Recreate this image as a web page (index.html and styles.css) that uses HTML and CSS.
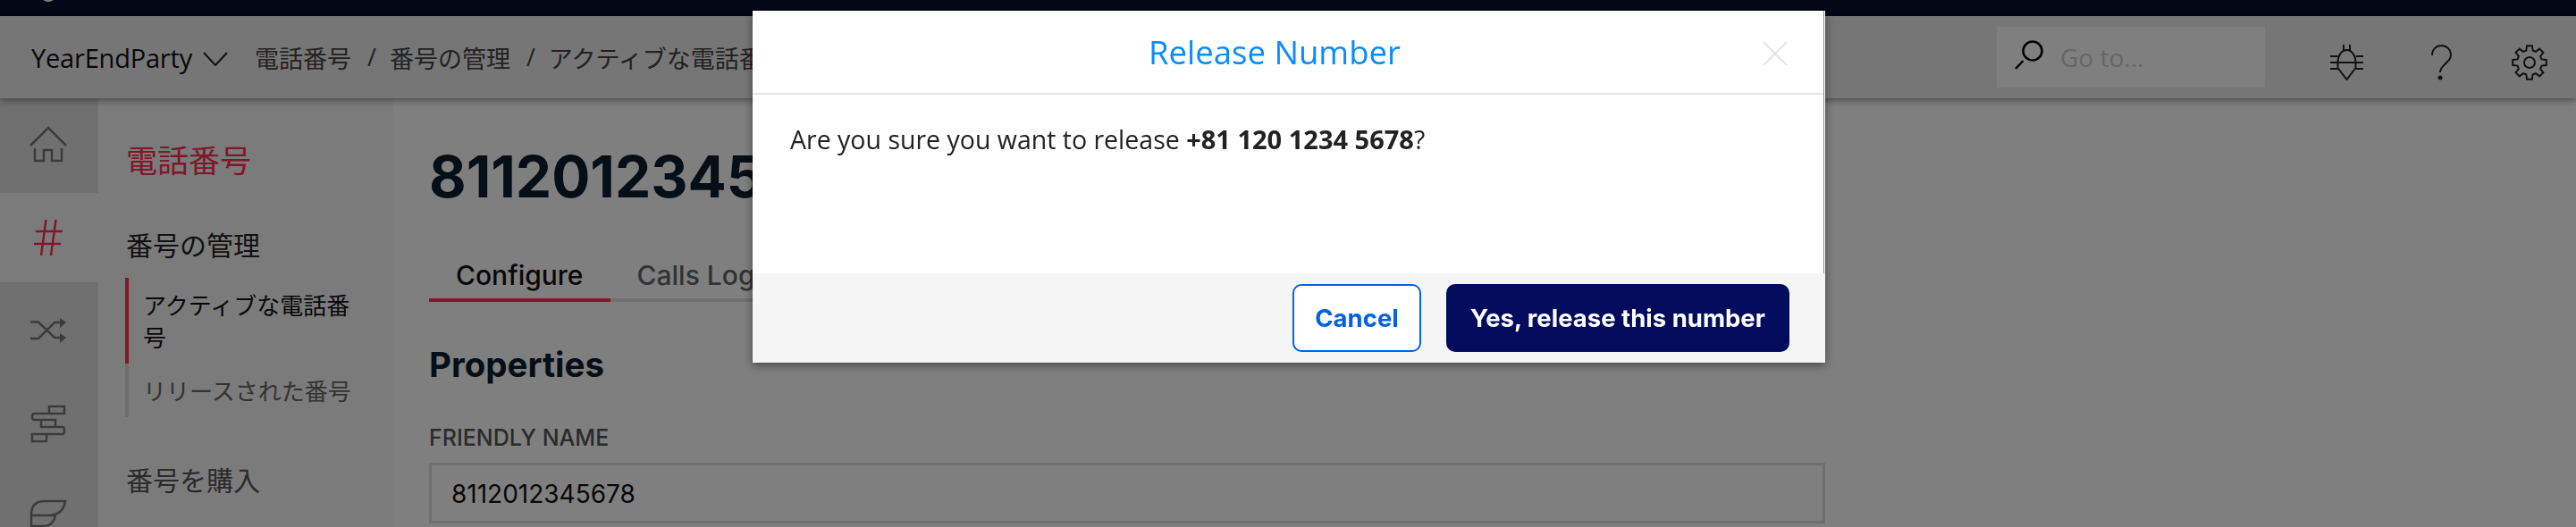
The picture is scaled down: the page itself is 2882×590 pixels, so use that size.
FILE: index.html
```html
<!DOCTYPE html>
<html lang="en">
<head>
  <meta charset="UTF-8">
  <title>Release Number</title>
  <link rel="stylesheet" href="styles.css">
</head>
<body>

  <div class="topbar"><span class="logo"></span></div>

  <header class="header">
    <span class="account">YearEndParty</span>
    <svg class="chevron" width="28" height="16" viewBox="0 0 28 16"><path d="M1 1L14 15L27 1"/></svg>
    <nav class="crumbs">
      <span>電話番号</span><span class="sep">/</span>
      <span>番号の管理</span><span class="sep">/</span>
      <span>アクティブな電話番号</span>
    </nav>
    <div class="search">
      <svg width="34" height="34" viewBox="0 0 34 34"><circle cx="20" cy="12" r="10.5"/><path d="M1 32L9.5 23"/></svg>
      <span class="search-text">Go to...</span>
    </div>
    <div class="tools">
      <svg class="bug" width="40" height="40" viewBox="0 0 40 40"><path d="M9.5 20C9.5 12 14 6 19.5 6C25 6 29.5 12 29.5 20V26L19.5 39L9.5 26ZM16 6V0M23 6V0M1 13H9.5M1 20H38M1 27H9.5M30 13H38M30 27H38"/></svg>
      <svg class="help" width="24" height="40" viewBox="0 0 24 40"><path d="M1 12C1 5 6 1 11.500 1C17 1 22 5 22 12C22 20 10 22 10 31"/><circle class="dot" cx="10" cy="37" r="2.500"/></svg>
      <svg width="40" height="40" viewBox="0 0 40 40"><path d="M16.400 6.500L17 1.200H23L23.600 6.500L27 7.900L31.200 4.600L35.400 8.800L32.100 13L33.500 16.400L38.800 17V23L33.500 23.600L32.100 27L35.400 31.200L31.200 35.400L27 32.100L23.600 33.500L23 38.800H17L16.400 33.500L13 32.100L8.800 35.400L4.600 31.200L7.900 27L6.500 23.600L1.200 23V17L6.500 16.400L7.900 13L4.600 8.800L8.800 4.600L13 7.900Z"/><circle cx="20" cy="20" r="6"/></svg>
    </div>
  </header>

  <div class="layout">
    <aside class="rail">
      <div class="rail-item">
        <svg width="110" height="106" viewBox="0 0 110 106"><path d="M34 53L54 33L74 53M39 56V70H49V58H58V70H69V56"/></svg>
      </div>
      <div class="rail-item active">
        <svg class="red" width="110" height="100" viewBox="0 0 110 100"><path d="M40 43H70M38 57H68M51.500 30L46 70M62.500 30L57 70"/></svg>
      </div>
      <div class="rail-item">
        <svg width="110" height="100" viewBox="0 0 110 100"><path d="M34 44.500H43L61 62H68M34 63H43L61 45H68"/><path class="fill" d="M67 40L74 45L67 51ZM67 57L74 62L67 68Z"/></svg>
      </div>
      <div class="rail-item">
        <svg width="110" height="100" viewBox="0 0 110 100"><path d="M55 39H72V47H55ZM55 47H38Q36 47 36 50.500Q36 54 38 54H62M46 54H62V62H46ZM62 62H70Q72 62 72 66Q72 70 70 70H36V78H52V70"/></svg>
      </div>
      <div class="rail-item">
        <svg width="110" height="74" viewBox="0 0 110 74"><path d="M35 74V60Q35 45 50 45H73Q71 60 55 61H35M55 61H62Q60 72 50 73M35 73H52L46 74"/></svg>
      </div>
    </aside>

    <section class="subnav">
      <h3 class="subnav-title">電話番号</h3>
      <h4 class="subnav-head">番号の管理</h4>
      <ul class="subnav-list">
        <li class="current">アクティブな電話番号</li>
        <li>リリースされた番号</li>
      </ul>
      <h4 class="subnav-head muted">番号を購入</h4>
    </section>

    <main class="main">
      <h1>8112012345678</h1>
      <div class="tabs">
        <span class="tab on">Configure</span>
        <span class="tab">Calls Log</span>
      </div>
      <h2>Properties</h2>
      <label class="field-label">FRIENDLY NAME</label>
      <div class="field">8112012345678</div>
    </main>
  </div>

  <div class="overlay">
    <div class="modal">
      <div class="modal-top">
        <div class="modal-head">
          <span class="modal-title">Release Number</span>
          <svg class="close" width="28" height="28" viewBox="0 0 28 28"><path d="M1 1L27 27M27 1L1 27"/></svg>
        </div>
        <p class="modal-body">Are you sure you want to release <b>+81 120 1234 5678</b>?</p>
      </div>
      <div class="modal-foot">
        <button class="btn cancel">Cancel</button>
        <button class="btn yes">Yes, release this number</button>
      </div>
    </div>
  </div>

</body>
</html>
```

FILE: styles.css
```css
* {
  box-sizing: border-box;
}

html, body {
  margin: 0;
  height: 590px;
  overflow: hidden;
}

body {
  font-family: "Open Sans", "Noto Sans CJK JP", sans-serif;
  background: #fff;
  color: #1c2026;
}

svg {
  flex: none;
  display: block;
  fill: none;
  stroke: #222;
  stroke-width: 2;
}

.topbar {
  height: 18px;
  background: #080f2d;
  overflow: hidden;
}

.logo {
  display: block;
  width: 18px;
  height: 18px;
  margin: -16px 0 0 45px;
  border-radius: 50%;
  background: #fff;
}

.header {
  position: relative;
  z-index: 2;
  height: 92px;
  display: flex;
  align-items: center;
  padding: 0 32px 0 35px;
  background: #ececec;
  box-shadow: 0 2px 8px rgba(0,0,0,0.45);
}

.account {
  font-size: 29px;
  letter-spacing: -0.2px;
  color: #111;
  white-space: nowrap;
}

.chevron {
  margin: 4px 30px 0 12px;
}

.crumbs {
  display: flex;
  font-size: 27px;
  color: #444;
  white-space: nowrap;
}

.sep {
  margin: 0 15px 0 18px;
}

.search {
  margin-left: auto;
  width: 300px;
  height: 68px;
  display: flex;
  align-items: center;
  padding-left: 20px;
  background: #fff;
}

.search svg {
  stroke: #000;
  stroke-width: 2.500;
  margin-top: -4px;
}

.search-text {
  margin-left: 17px;
  font-size: 28px;
  color: #ccc;
}

.tools {
  display: flex;
  align-items: center;
  margin-left: 72px;
}

.tools svg {
  margin-top: 12px;
}

.tools .bug {
  margin-right: 74px;
}

.tools .help {
  margin-right: 66px;
}

.tools .dot {
  fill: #222;
  stroke: none;
}

.layout {
  display: flex;
  height: 480px;
}

.rail {
  width: 110px;
  flex: none;
  background: #e0e0e0;
}

.rail-item svg {
  stroke: #777;
  stroke-width: 2.500;
}

.rail-item .fill {
  fill: #777;
  stroke: none;
}

.rail-item .red {
  stroke: #ff3050;
}

.rail-item.active {
  background: #f6f6f6;
}

.subnav {
  width: 330px;
  flex: none;
  padding-left: 31px;
  background: #f6f6f6;
  font-family: "Noto Sans CJK JP", sans-serif;
}

.subnav-title {
  margin: 43px 0 0;
  font-size: 35px;
  line-height: 50px;
  font-weight: 400;
  color: #ff3050;
}

.subnav-head {
  margin: 48px 0 0;
  font-size: 30px;
  line-height: 44px;
  font-weight: 400;
  color: #222;
}

.subnav-head.muted {
  margin-top: 47px;
  color: #555;
}

.subnav-list {
  list-style: none;
  margin: 16px 0 0 -1px;
  padding: 0;
  width: 280px;
  font-size: 26px;
  line-height: 36px;
  color: #666;
}

.subnav-list li {
  padding: 12px 20px 12px 16px;
  border-left: 4px solid #ddd;
}

.subnav-list .current {
  color: #111;
  border-left-color: #ff3050;
}

.main {
  flex: 1;
  padding: 0 840px 0 40px;
  min-width: 0;
  font-family: Inter, sans-serif;
}

h1 {
  margin: 49px 0 0;
  font-size: 64px;
  line-height: 78px;
  font-weight: 700;
  color: #0d1c2e;
  white-space: nowrap;
}

.tabs {
  display: flex;
  margin-top: 49px;
  border-bottom: 4px solid #e0e0e0;
}

.tab {
  margin-bottom: -4px;
  padding: 0 30px 4px;
  font-size: 30px;
  line-height: 44px;
  font-weight: 500;
  color: #666;
}

.tab.on {
  color: #111;
  border-bottom: 4px solid #ff3050;
}

h2 {
  margin: 46px 0 0;
  font-size: 38.500px;
  line-height: 48px;
  font-weight: 700;
  color: #0d1c2e;
}

.field-label {
  display: block;
  margin-top: 44px;
  font-size: 25px;
  line-height: 28px;
  font-weight: 500;
  color: #555;
}

.field {
  margin-top: 14px;
  height: 68px;
  padding-left: 22px;
  border: 3px solid #dedede;
  font-size: 28px;
  line-height: 64px;
  color: #111;
}

.overlay {
  position: fixed;
  inset: 0;
  z-index: 5;
  display: flex;
  justify-content: center;
  align-items: flex-start;
  padding: 12px 0 0 2px;
  background: rgba(0,0,0,0.5);
}

.modal {
  width: 1200px;
  background: #fff;
  box-shadow: 0 3px 10px rgba(0,0,0,0.45);
}

.modal-top {
  height: 294px;
  margin-right: 1px;
  border-right: 1px solid #8a8a8a;
}

.modal-head {
  height: 94px;
  display: flex;
  align-items: center;
  justify-content: center;
  position: relative;
  padding-right: 30px;
  border-bottom: 2px solid #e6e6e6;
}

.modal-title {
  font-size: 36.500px;
  color: #0a8cff;
}

.close {
  position: absolute;
  right: 40px;
  top: 34px;
  stroke: #e4e4e4;
}

.modal-body {
  margin: 30px 0 0 42px;
  font-size: 28.500px;
  line-height: 40px;
  color: #222;
}

.modal-body b {
  font-size: 29px;
}

.modal-foot {
  height: 100px;
  display: flex;
  justify-content: flex-end;
  align-items: center;
  gap: 28px;
  padding-right: 40px;
  background: #f5f5f5;
}

.btn {
  height: 76px;
  font-family: Inter, sans-serif;
  font-size: 27.500px;
  font-weight: 700;
  border-radius: 10px;
  cursor: pointer;
}

.cancel {
  width: 144px;
  background: #fff;
  color: #0263e0;
  border: 2px solid #0263e0;
}

.yes {
  width: 384px;
  background: #030b5d;
  color: #fff;
  border: none;
}
```
